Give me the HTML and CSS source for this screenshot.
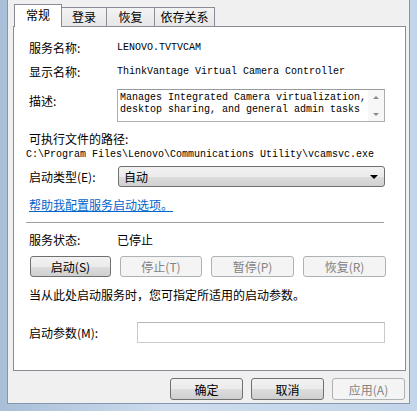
FILE: index.html
```html
<!DOCTYPE html>
<html lang="zh-CN">
<head>
    <meta charset="UTF-8">
    <title>服务属性</title>
    <link rel="stylesheet" href="styles.css">
</head>
<body>
    <div class="window">
        <div class="tabs">
            <div class="tab active">常规</div>
            <div class="tab w45">登录</div>
            <div class="tab">恢复</div>
            <div class="tab w60">依存关系</div>
        </div>

        <div class="panel">
            <div class="row r-first">
                <span class="label">服务名称:</span>
                <span class="mono">LENOVO.TVTVCAM</span>
            </div>
            <div class="row r-name">
                <span class="label">显示名称:</span>
                <span class="mono">ThinkVantage Virtual Camera Controller</span>
            </div>
            <div class="row r-desc">
                <span class="label label-top">描述:</span>
                <div class="desc-box">
                    <div class="desc-text mono">Manages Integrated Camera virtualization,<br>desktop sharing, and general admin tasks</div>
                    <div class="scroll">
                        <span class="arrow up"></span>
                        <span class="arrow down"></span>
                    </div>
                </div>
            </div>
            <div class="path-label">可执行文件的路径:</div>
            <div class="path mono">C:\Program Files\Lenovo\Communications Utility\vcamsvc.exe</div>
            <div class="row r-type">
                <span class="label">启动类型(E):</span>
                <div class="select">
                    <span>自动</span>
                    <span class="caret"></span>
                </div>
            </div>
            <a class="help" href="#">帮助我配置服务启动选项。</a>
            <div class="divider"></div>
            <div class="row r-status">
                <span class="label">服务状态:</span>
                <span>已停止</span>
            </div>
            <div class="actions">
                <button class="btn">启动(S)</button>
                <button class="btn" disabled>停止(T)</button>
                <button class="btn" disabled>暂停(P)</button>
                <button class="btn" disabled>恢复(R)</button>
            </div>
            <div class="hint">当从此处启动服务时，您可指定所适用的启动参数。</div>
            <div class="row r-param">
                <span class="label label-wide">启动参数(M):</span>
                <div class="param-input"></div>
            </div>
        </div>

        <div class="footer">
            <button class="btn btn-footer">确定</button>
            <button class="btn btn-footer">取消</button>
            <button class="btn btn-footer" disabled>应用(A)</button>
        </div>
    </div>
</body>
</html>
```

FILE: styles.css
```css
body {
    margin: 0;
    width: 417px;
    height: 411px;
    overflow: hidden;
    background: linear-gradient(to right, #a9bfd8, #cddcee 40%, #c3d5ea);
    font-family: "Noto Sans CJK SC", "Liberation Sans", sans-serif;
    font-size: 12px;
    color: #000;
}
.window {
    box-sizing: border-box;
    width: 403px;
    height: 404px;
    margin-left: 7px;
    padding: 0 3px 0 5px;
    background-color: #f0f0f0;
    border: 1px solid #8496ab;
    border-top: none;
}
.mono {
    font-family: "Liberation Mono", "DejaVu Sans Mono", monospace;
    font-size: 10px;
}

/* tabs */
.tabs {
    display: flex;
    align-items: flex-end;
    height: 26px;
    padding-left: 1px;
}
.tab {
    box-sizing: border-box;
    width: 48px;
    height: 19px;
    line-height: 17px;
    text-align: center;
    border: 1px solid #898c95;
    border-bottom: none;
    border-left: none;
    background: linear-gradient(#f3f3f3, #e6e6e6);
}
.tab.w45 { width: 45px; }
.tab.w60 { width: 60px; }
.tab.active {
    position: relative;
    z-index: 1;
    height: 23px;
    margin-bottom: -1px;
    line-height: 20px;
    border-left: 1px solid #898c95;
    background: #fff;
}

/* panel */
.panel {
    box-sizing: border-box;
    height: 345px;
    padding: 12px 20px 0 15px;
    background: #fff;
    border: 1px solid #898c95;
}
.row {
    display: flex;
    align-items: center;
    min-height: 16px;
}
.label {
    width: 88px;
    flex-shrink: 0;
}
.label-top {
    align-self: flex-start;
    padding-top: 3px;
}
.label-wide {
    width: 108px;
}
.r-name { margin-top: 7px; }
.r-desc { margin-top: 9px; }
.desc-box {
    flex: 1;
    display: flex;
    height: 31px;
    border: 1px solid #abadb3;
    border-top-color: #979a9f;
}
.desc-text {
    flex: 1;
    padding: 2px 0 0 2px;
    line-height: 12px;
    white-space: nowrap;
    overflow: hidden;
}
.scroll {
    width: 16px;
    display: flex;
    flex-direction: column;
    justify-content: space-between;
    align-items: center;
    padding: 6px 0 5px;
    box-sizing: border-box;
    background: #f7f7f7;
}
.arrow {
    width: 0;
    height: 0;
    border-left: 3px solid transparent;
    border-right: 3px solid transparent;
}
.arrow.up { border-bottom: 3px solid #8a8a8a; }
.arrow.down { border-top: 3px solid #8a8a8a; }

.path-label {
    margin-top: 9px;
    line-height: 16px;
}
.path {
    margin-left: -3px;
    line-height: 16px;
    white-space: nowrap;
}
.r-type { margin-top: 3px; }
.select {
    box-sizing: border-box;
    flex: 1;
    margin-left: 1px;
    height: 21px;
    display: flex;
    align-items: center;
    justify-content: space-between;
    padding: 0 6px 0 5px;
    border: 1px solid #707070;
    border-radius: 3px;
    background: linear-gradient(#f2f2f2 0%, #ebebeb 50%, #dddddd 51%, #cfcfcf 100%);
}
.caret {
    width: 0;
    height: 0;
    border-left: 4px solid transparent;
    border-right: 4px solid transparent;
    border-top: 4px solid #000;
}
.help {
    display: block;
    margin-top: 10px;
    line-height: 16px;
    color: #0066cc;
    text-decoration: underline;
}
.divider {
    margin: 9px 1px 0 -3px;
    border-top: 1px solid #a0a0a0;
}
.r-status { margin-top: 8px; }

/* buttons */
.actions {
    display: grid;
    grid-template-columns: 81px 82px 83px 83px;
    gap: 9px;
    margin-top: 8px;
    margin-left: 1px;
}
.btn {
    box-sizing: border-box;
    height: 21px;
    padding: 0;
    font: inherit;
    color: #000;
    border: 1px solid #707070;
    border-radius: 3px;
    background: linear-gradient(#f2f2f2 0%, #ebebeb 50%, #dddddd 51%, #cfcfcf 100%);
}
.btn:disabled {
    color: #838383;
    border-color: #adb2b5;
    background: #f4f4f4;
}
.hint {
    margin-top: 10px;
    line-height: 16px;
}
.r-param { margin-top: 19px; }
.param-input {
    flex: 1;
    height: 21px;
    box-sizing: border-box;
    border: 1px solid #c9cbcf;
    border-top-color: #b5b7bb;
}

.footer {
    display: flex;
    justify-content: flex-end;
    gap: 8px;
    margin-top: 7px;
    padding-right: 1px;
}
.btn-footer {
    width: 73px;
    height: 22px;
}
```
